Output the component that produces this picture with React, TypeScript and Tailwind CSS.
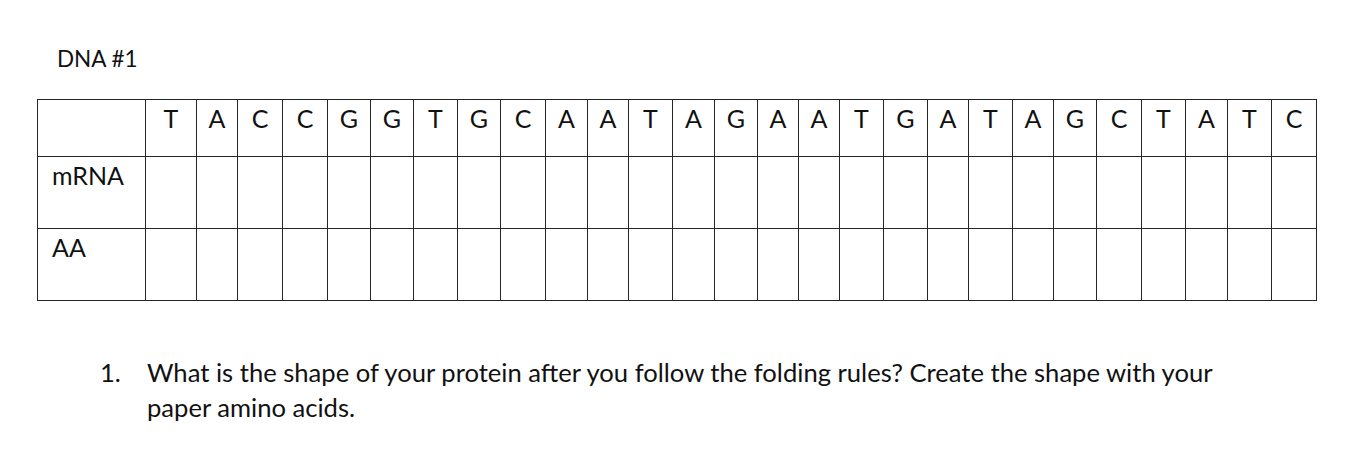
const bases = 'TACCGGTGCAATAGAATGATAGCTATC'.split('');

// column widths measured off the worksheet
const colWidths = [
  'w-[51px]', 'w-[41px]', 'w-[45px]', 'w-[45px]', 'w-[43px]', 'w-[43px]', 'w-[44px]',
  'w-[43px]', 'w-[45px]', 'w-[42px]', 'w-[41px]', 'w-[44px]', 'w-[42px]', 'w-[43px]',
  'w-[41px]', 'w-[41px]', 'w-[44px]', 'w-[44px]', 'w-[41px]', 'w-[44px]', 'w-[41px]',
  'w-[43px]', 'w-[45px]', 'w-[44px]', 'w-[42px]', 'w-[44px]', 'w-[45px]',
];

const cell = 'border border-[#262626] p-0 align-top';

export default function App() {
  return (
    <div className="w-[1372px] h-[457px] bg-white text-[#111] font-['Lato',sans-serif] overflow-hidden">
      <div className="pt-[44px] pl-[57px] text-[22.5px] leading-[30px]">DNA #1</div>

      <table className="mt-[25px] ml-[37px] border-collapse table-fixed w-[1279px]">
        <colgroup>
          <col className="w-[108px]" />
          {colWidths.map((w, i) => (
            <col key={i} className={w} />
          ))}
        </colgroup>
        <tbody>
          <tr className="h-[57px]">
            <td className={cell} />
            {bases.map((b, i) => (
              <td key={i} className={`${cell} text-center text-[25px] leading-[34px] pt-[1px]`}>
                {b}
              </td>
            ))}
          </tr>
          <tr className="h-[72px]">
            <td className={`${cell} pl-[14px] pt-[1px] text-[25px] leading-[34px]`}>mRNA</td>
            {bases.map((_, i) => (
              <td key={i} className={cell} />
            ))}
          </tr>
          <tr className="h-[72px]">
            <td className={`${cell} pl-[14px] pt-[1px] text-[25px] leading-[34px]`}>AA</td>
            {bases.map((_, i) => (
              <td key={i} className={cell} />
            ))}
          </tr>
        </tbody>
      </table>

      <ol className="mt-[54px] pl-[100px] text-[25.6px] leading-[35px]">
        <li className="flex">
          <span className="w-[47px] shrink-0">1.</span>
          <span className="w-[1100px]">
            What is the shape of your protein after you follow the folding rules? Create the shape with your
            paper amino acids.
          </span>
        </li>
      </ol>
    </div>
  );
}
